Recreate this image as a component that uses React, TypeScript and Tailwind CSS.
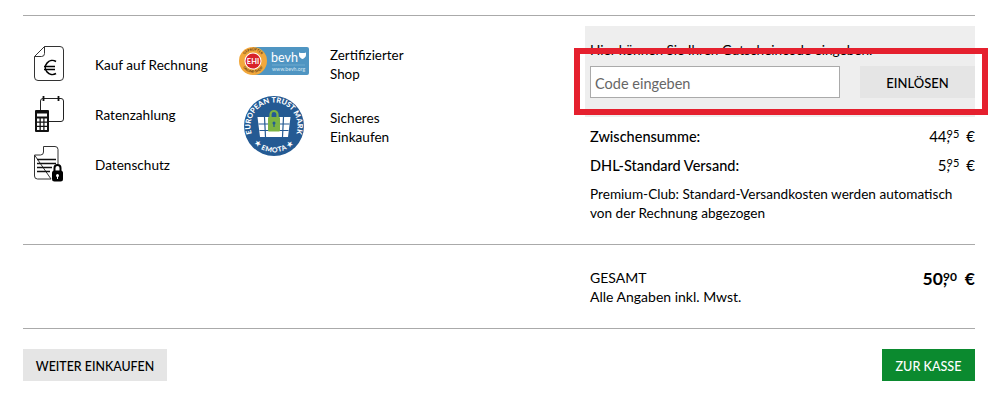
import React from 'react';

const font = { fontFamily: 'Lato, "Liberation Sans", sans-serif' };

const InvoiceIcon = () => (
  <svg width="40" height="40" viewBox="0 0 40 40" fill="none" stroke="#333">
    <path d="M14.500 2.500H30a3.500 3.500 0 0 1 3.500 3.500V33a3.500 3.500 0 0 1-3.500 3.500H8A3.500 3.500 0 0 1 4.500 33V12.500Z" />
    <path d="M14.500 2.500V9.500a3 3 0 0 1-3 3h-7" />
    <path d="M26 17.500a7 7 0 1 0 0 12" stroke="#000" strokeWidth="1.600" />
    <path d="M14 22.500H25M14 25.500H25" stroke="#000" strokeWidth="1.500" />
  </svg>
);

const RateIcon = () => (
  <svg width="40" height="40" viewBox="0 0 40 40" fill="none">
    <path d="M10.500 16V7a2.500 2.500 0 0 1 2.500-2.500H31A2.500 2.500 0 0 1 33.500 7V25a2.500 2.500 0 0 1-2.500 2.500H19" stroke="#222" />
    <path d="M13.500 2v5M28.500 2v5" stroke="#111" strokeWidth="1.800" />
    <rect x="5" y="16" width="14" height="22" rx="1" fill="#111" />
    <rect x="7" y="19.500" width="10" height="3" fill="#fff" />
    <path d="M7 24.500h2.500v3H7zM10.800 24.500h2.500v3h-2.500zM14.500 24.500h2.500v3h-2.500zM7 28.800h2.500v3H7zM10.800 28.800h2.500v3h-2.500zM14.500 28.800h2.500v3h-2.500zM7 33h2.500v3H7zM10.800 33h2.500v3h-2.500zM14.500 33h2.500v3h-2.500z" fill="#fff" />
  </svg>
);

const PrivacyIcon = () => (
  <svg width="40" height="40" viewBox="0 0 40 40" fill="none">
    <path d="M13.500 2.500H25a3 3 0 0 1 3 3V20M21 35H7.500a3 3 0 0 1-3-3V11Z" stroke="#333" />
    <path d="M13.500 2.500V8a3 3 0 0 1-3 3H4.500" stroke="#333" />
    <path d="M7 15.500H26M7 19.500H26M7 23.500H22M7 27.500H20" stroke="#111" strokeWidth="1.500" />
    <path d="M24.500 27v-3a3 3 0 0 1 6 0v3" stroke="#000" strokeWidth="2" />
    <rect x="22" y="26.500" width="11" height="11" rx="2.500" fill="#000" />
    <circle cx="27.500" cy="31.500" r="1.500" fill="#fff" />
    <rect x="27" y="32" width="1" height="3" fill="#fff" />
  </svg>
);

const BevhLogo = () => (
  <svg width="70" height="28" viewBox="0 0 70 28">
    <defs>
      <path id="ehi-top" d="M3.500 14a10.500 10.500 0 0 1 21 0" />
      <path id="ehi-bottom" d="M1.800 15a12.300 12.300 0 0 0 24.400 0" />
    </defs>
    <rect x="13" y="0" width="57" height="28" rx="2" fill="#4f95c2" />
    <circle cx="14" cy="14" r="14" fill="#f2a83c" />
    <text fontSize="3.400" fontWeight="700" fill="#5b3a12" fontFamily="Lato">
      <textPath href="#ehi-top" startOffset="50%" textAnchor="middle">GEPRÜFTER</textPath>
    </text>
    <text fontSize="3.400" fontWeight="700" fill="#5b3a12" fontFamily="Lato">
      <textPath href="#ehi-bottom" startOffset="50%" textAnchor="middle">ONLINE-SHOP</textPath>
    </text>
    <circle cx="14" cy="14" r="8.500" fill="#fff" />
    <circle cx="14" cy="14" r="7.500" fill="#d8232a" />
    <text x="14" y="16.800" textAnchor="middle" fontSize="7.500" fontWeight="700" fill="#fff" fontFamily="Lato">EHI</text>
    <text x="32" y="14.500" fontSize="12.500" fill="#fff" fontFamily="Lato">bevh</text>
    <path d="M60 5.500c2 .8 5 .8 7 0v2.500c0 2-2 3.500-3.500 4-1.500-.5-3.500-2-3.500-4Z" fill="#fff" />
    <path d="M33 18h33" stroke="#8fbcd8" strokeWidth=".5" />
    <text x="33" y="24" fontSize="5.200" fill="#d5e6f1" fontFamily="Lato">www.bevh.org</text>
  </svg>
);

const TrustLogo = () => (
  <svg width="60" height="60" viewBox="0 0 60 60">
    <defs>
      <path id="trust-top" d="M10.400 43A23.500 23.500 0 1 1 49.600 43" />
      <path id="trust-bottom" d="M7 43A26.500 26.500 0 0 0 53 43" />
    </defs>
    <circle cx="30" cy="30" r="30" fill="#245a93" />
    <text fontSize="7.400" fontWeight="900" fill="#fff" fontFamily="Lato">
      <textPath href="#trust-top" startOffset="50%" textAnchor="middle">EUROPEAN TRUST MARK</textPath>
    </text>
    <text fontSize="7" fontWeight="900" fill="#fff" fontFamily="Lato" letterSpacing=".6">
      <textPath href="#trust-bottom" startOffset="50%" textAnchor="middle">★ EMOTA ★</textPath>
    </text>
    <path d="M13.500 21h33l-2.500 20H16Z" fill="#fff" />
    <path d="M20.500 21l1 20M39.500 21l-1 20M14.500 28h31M15.500 34.500h29" stroke="#245a93" strokeWidth="1.200" />
    <path d="M26.500 22v-3.500a3.500 3.500 0 0 1 7 0V22" fill="none" stroke="#7cb342" strokeWidth="2.200" />
    <rect x="24" y="21" width="12" height="14.500" rx="1" fill="#7cb342" />
    <circle cx="30" cy="27" r="1.500" fill="#245a93" />
    <rect x="29.400" y="27" width="1.200" height="4" fill="#245a93" />
  </svg>
);

const Price = ({ euro, cent, bold }: { euro: string; cent: string; bold?: boolean }) => (
  <span className={bold ? 'font-bold text-[17.5px] pt-[1px]' : 'text-[15px] font-normal'}>
    {euro}
    <span className="inline-block w-0">,</span>
    <span className={`${bold ? 'text-[12px]' : 'text-[11px]'} relative -top-[4px]`}>{cent}</span>
    <span className={bold ? 'ml-[8px]' : 'ml-[7px]'}>€</span>
  </span>
);

const payments = [
  { icon: <InvoiceIcon />, label: 'Kauf auf Rechnung' },
  { icon: <RateIcon />, label: 'Ratenzahlung' },
  { icon: <PrivacyIcon />, label: 'Datenschutz' },
];

export default function App() {
  return (
    <div className="relative w-[997px] h-[420px] bg-white text-black text-[13.6px] leading-[19px] pl-[23px] pr-[22px] pt-[15px]" style={font}>
      <div className="flex h-[230px] border-y border-[#aaa]">
        <div className="w-[212px] pl-[7px] pt-[23px]">
          {payments.map((p) => (
            <div key={p.label} className="flex items-center h-[50px]">
              <div className="w-[65px]">{p.icon}</div>
              <span className="pt-[2px]">{p.label}</span>
            </div>
          ))}
        </div>
        <div className="w-[350px] pl-[4px] pt-[31px]">
          <div className="flex items-start h-[28px]">
            <div className="w-[91px]"><BevhLogo /></div>
            <span className="-mt-[1px] text-[13.4px]">Zertifizierter<br />Shop</span>
          </div>
          <div className="flex items-start mt-[21px]">
            <div className="w-[91px] pl-[5px]"><TrustLogo /></div>
            <span className="mt-[13px]">Sicheres<br />Einkaufen</span>
          </div>
        </div>
        <div className="flex-1 pt-[10px]">
          <div className="bg-[#eee] h-[91px] pl-[5px] pt-[15px]">
            <div className="h-[25px]">Hier können Sie Ihren Gutscheincode eingeben:</div>
            <div className="flex justify-between">
              <div className="w-[250px] h-[32px] flex items-center bg-white border border-[#aaa] px-[4px] pt-[3px] text-[#666] text-[14.5px]">Code eingeben</div>
              <div className="w-[115px] h-[32px] flex items-center justify-center bg-[#e5e5e5] text-[13px] font-medium pt-[2px]">EINLÖSEN</div>
            </div>
          </div>
          <div className="pl-[5px] pt-[5px]">
            <div className="flex justify-between items-center h-[29px] font-medium text-[14.5px]">
              <span>Zwischensumme:</span>
              <Price euro="44" cent="95" />
            </div>
            <div className="flex justify-between items-center h-[29px] font-medium text-[14.5px]">
              <span>DHL-Standard Versand:</span>
              <Price euro="5" cent="95" />
            </div>
            <p className="mt-[5px]">Premium-Club: Standard-Versandkosten werden automatisch<br />von der Rechnung abgezogen</p>
          </div>
        </div>
      </div>
      <div className="flex h-[84px] border-b border-[#aaa]">
        <div className="ml-[567px] flex-1 pt-[23px] flex justify-between text-[14px]">
          <div>
            <div>GESAMT</div>
            <div>Alle Angaben inkl. Mwst.</div>
          </div>
          <Price euro="50" cent="90" bold />
        </div>
      </div>
      <div className="flex justify-between pt-[20px]">
        <div className="h-[32px] w-[144px] flex items-center justify-center bg-[#e5e5e5] text-[12.4px] font-medium pt-[2px]">WEITER EINKAUFEN</div>
        <div className="h-[32px] w-[93px] flex items-center justify-center bg-[#0b8a2f] text-white text-[12.6px] font-medium pt-[2px]">ZUR KASSE</div>
      </div>
      <div className="absolute left-[574px] top-[48px] w-[414px] h-[67px] border-[6px] border-[#e5202e]" />
    </div>
  );
}
